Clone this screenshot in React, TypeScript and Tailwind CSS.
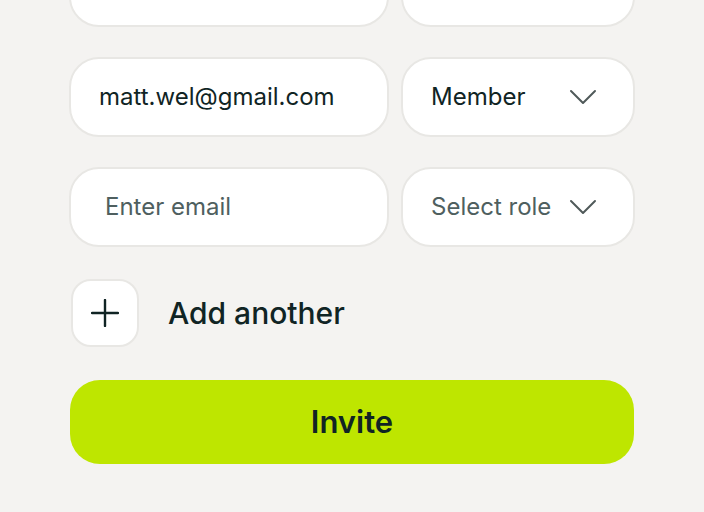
function Chevron() {
  return (
    <svg width="28" height="18" viewBox="0 0 28 18" fill="none" className="text-[#505a5a]">
      <path d="M2 3l12 12L26 3" stroke="currentColor" strokeWidth="2" strokeLinecap="round" strokeLinejoin="round" />
    </svg>
  )
}

function PlusIcon() {
  return (
    <svg width="28" height="28" viewBox="0 0 28 28" fill="none" className="text-[#102424]">
      <path d="M14 1v26M1 14h26" stroke="currentColor" strokeWidth="2.4" strokeLinecap="round" />
    </svg>
  )
}

function EmailField({ value, placeholder }: { value?: string; placeholder?: string }) {
  return (
    <div className="flex h-[80px] w-[320px] shrink-0 items-center rounded-[30px] border-2 border-[#e8e7e4] bg-white pl-[28px]">
      {value ? (
        <span className="text-[24px] text-[#102424]">{value}</span>
      ) : (
        <span className="pl-[6px] text-[24px] text-[#4f5f5f]">{placeholder}</span>
      )}
    </div>
  )
}

function RoleSelect({ value, placeholder }: { value?: string; placeholder?: string }) {
  return (
    <div className="flex h-[80px] flex-1 items-center justify-between rounded-[30px] border-2 border-[#e8e7e4] bg-white pl-[28px] pr-[36px]">
      <span className={value ? "text-[24px] text-[#102424]" : "text-[24px] text-[#4f5f5f]"}>
        {value ?? placeholder}
      </span>
      <Chevron />
    </div>
  )
}

export default function App() {
  return (
    <div className="h-[512px] w-[704px] overflow-hidden bg-[#f4f3f1] font-['Inter',sans-serif]">
      <div className="ml-[69px] -mt-[53px] flex w-[566px] flex-col">
        <div className="flex gap-[12px]">
          <EmailField value=" " />
          <RoleSelect value=" " />
        </div>
        <div className="mt-[30px] flex gap-[12px]">
          <EmailField value="matt.wel@gmail.com" />
          <RoleSelect value="Member" />
        </div>
        <div className="mt-[30px] flex gap-[12px]">
          <EmailField placeholder="Enter email" />
          <RoleSelect placeholder="Select role" />
        </div>
        <div className="mt-[32px] flex items-center gap-[29px] pl-[2px]">
          <div className="flex h-[68px] w-[68px] items-center justify-center rounded-[20px] border-2 border-[#e8e7e4] bg-white">
            <PlusIcon />
          </div>
          <span className="text-[30px] font-medium text-[#102424]">Add another</span>
        </div>
        <button className="mt-[33px] ml-[1px] flex h-[84px] w-[564px] items-center justify-center rounded-[30px] bg-[#bee600] text-[31px] font-semibold text-[#102424]">
          Invite
        </button>
      </div>
    </div>
  )
}
